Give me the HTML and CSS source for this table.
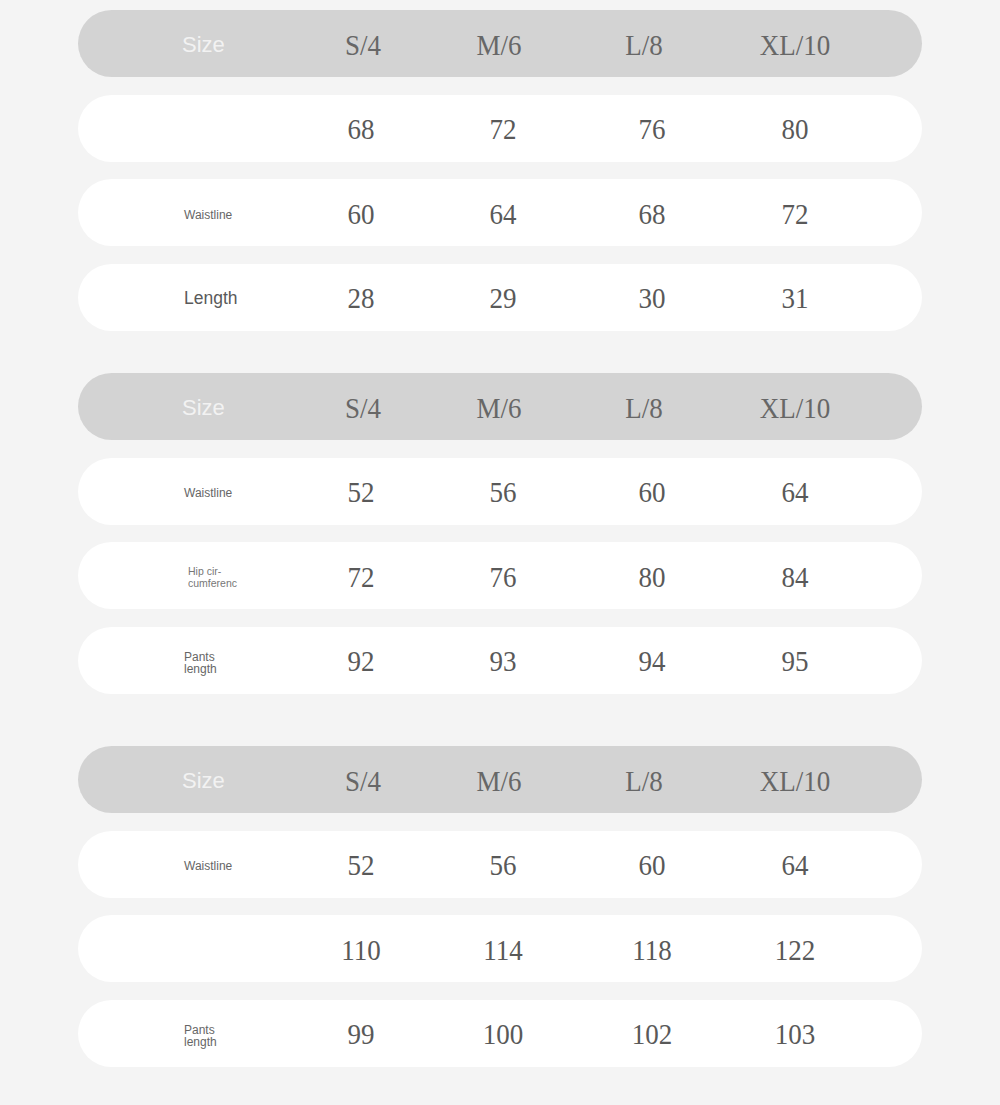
FILE: index.html
```html
<!DOCTYPE html>
<html>
<head>
<meta charset="utf-8">
<link rel="stylesheet" href="styles.css">
</head>
<body>
<main class="page">
  <section class="chart">
    <div class="bar head"><span class="label size">Size</span><span>S/4</span><span>M/6</span><span>L/8</span><span>XL/10</span></div>
    <div class="bar row"><span class="label"></span><span>68</span><span>72</span><span>76</span><span>80</span></div>
    <div class="bar row"><span class="label small">Waistline</span><span>60</span><span>64</span><span>68</span><span>72</span></div>
    <div class="bar row"><span class="label big">Length</span><span>28</span><span>29</span><span>30</span><span>31</span></div>
  </section>
  <section class="chart second">
    <div class="bar head"><span class="label size">Size</span><span>S/4</span><span>M/6</span><span>L/8</span><span>XL/10</span></div>
    <div class="bar row"><span class="label small">Waistline</span><span>52</span><span>56</span><span>60</span><span>64</span></div>
    <div class="bar row"><span class="label tiny">Hip cir-<br>cumferenc</span><span>72</span><span>76</span><span>80</span><span>84</span></div>
    <div class="bar row"><span class="label two">Pants<br>length</span><span>92</span><span>93</span><span>94</span><span>95</span></div>
  </section>
  <section class="chart third">
    <div class="bar head"><span class="label size">Size</span><span>S/4</span><span>M/6</span><span>L/8</span><span>XL/10</span></div>
    <div class="bar row"><span class="label small">Waistline</span><span>52</span><span>56</span><span>60</span><span>64</span></div>
    <div class="bar row"><span class="label"></span><span>110</span><span>114</span><span>118</span><span>122</span></div>
    <div class="bar row"><span class="label two">Pants<br>length</span><span>99</span><span>100</span><span>102</span><span>103</span></div>
  </section>
</main>
</body>
</html>
```

FILE: styles.css
```css
html, body {
  margin: 0;
  padding: 0;
  background: #f4f4f4;
}
.page {
  width: 844px;
  padding: 10px 0 0 78px;
}
.chart {
  display: flex;
  flex-direction: column;
  gap: 17.5px;
}
.chart.second { margin-top: 42.5px; }
.chart.third { margin-top: 52.5px; }
.bar {
  box-sizing: border-box;
  height: 67px;
  border-radius: 34px;
  display: grid;
  align-items: center;
  font-family: "Liberation Serif", "DejaVu Serif", serif;
  font-size: 27px;
  color: #595959;
}
.bar > span {
  text-align: center;
  transform: scaleY(1.1);
}
.head {
  padding-top: 4px;
  background: #d3d3d3;
  color: #676767;
  grid-template-columns: 214px 142px 130px 160px 142px;
}
.row {
  padding-top: 3px;
  background: #fff;
  grid-template-columns: 214px 138px 146px 152px 134px;
}
.bar > .label {
  transform: none;
  text-align: left;
  padding-left: 106px;
  font-family: "Liberation Sans", Arial, sans-serif;
  color: #666;
}
.label.size {
  padding-left: 104px;
  font-size: 22px;
  color: #f2f2f2;
  margin-top: -2px;
}
.label.small { font-size: 12px; margin-top: 1px; }
.label.big { font-size: 17.5px; color: #5a5a5a; }
.label.tiny {
  font-size: 10.5px;
  line-height: 12px;
  padding-left: 110px;
  color: #777;
}
.label.two {
  font-size: 12px;
  line-height: 12px;
  margin-top: 2px;
}
```
